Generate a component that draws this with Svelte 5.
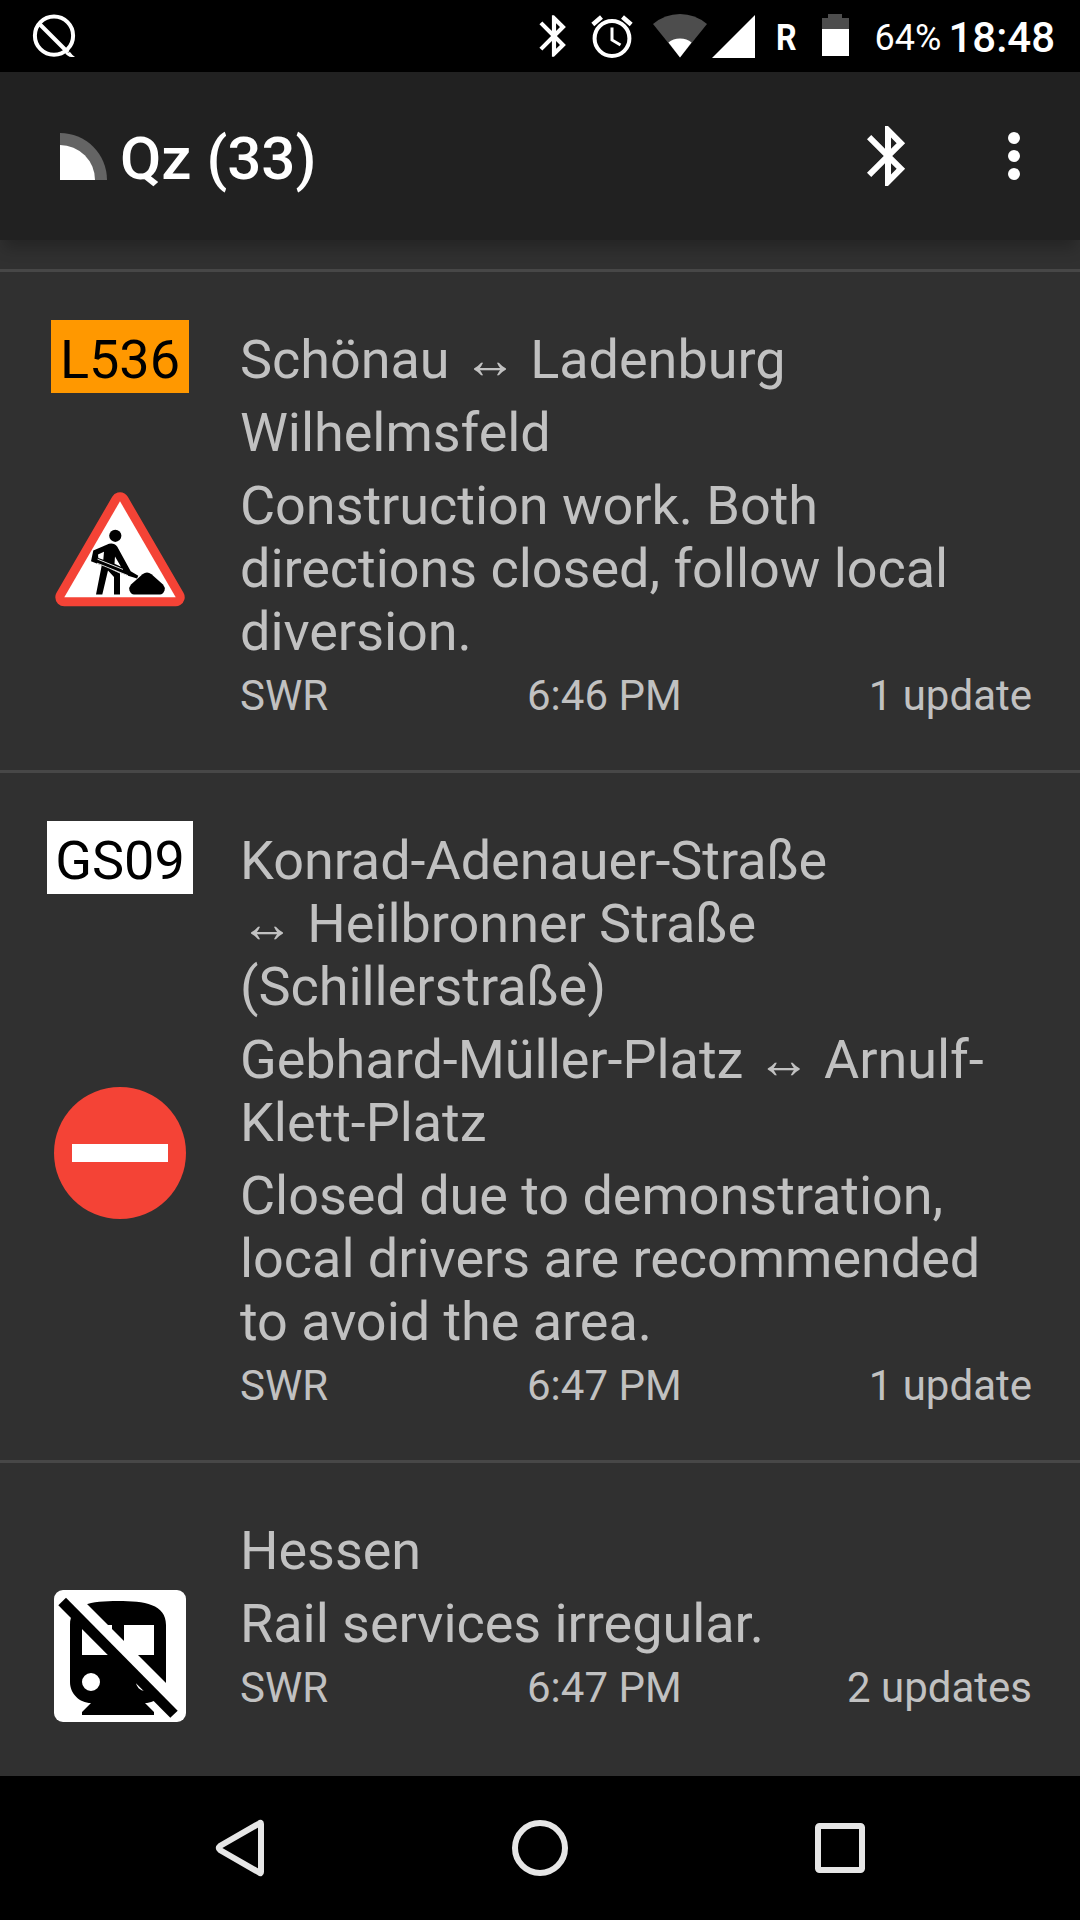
<script lang="ts">
  interface Report {
    road?: string
    roadClass?: 'orange' | 'white'
    icon: 'works' | 'closed' | 'rail'
    lines: string[][]
    source: string
    time: string
    updates: string
  }

  const reports: Report[] = [
    {
      road: 'L536',
      roadClass: 'orange',
      icon: 'works',
      lines: [
        ['Schönau ↔ Ladenburg'],
        ['Wilhelmsfeld'],
        ['Construction work. Both', 'directions closed, follow local', 'diversion.']
      ],
      source: 'SWR',
      time: '6:46 PM',
      updates: '1 update'
    },
    {
      road: 'GS09',
      roadClass: 'white',
      icon: 'closed',
      lines: [
        ['Konrad-Adenauer-Straße', '↔ Heilbronner Straße', '(Schillerstraße)'],
        ['Gebhard-Müller-Platz ↔ Arnulf-', 'Klett-Platz'],
        ['Closed due to demonstration,', 'local drivers are recommended', 'to avoid the area.']
      ],
      source: 'SWR',
      time: '6:47 PM',
      updates: '1 update'
    },
    {
      icon: 'rail',
      lines: [['Hessen'], ['Rail services irregular.']],
      source: 'SWR',
      time: '6:47 PM',
      updates: '2 updates'
    }
  ]

  const bluetooth =
    'M17.71 7.71L12 2h-1v7.59L6.41 5 5 6.41 10.59 12 5 17.59 6.41 19 11 14.41V22h1l5.71-5.71-4.3-4.29 4.3-4.29zM13 5.83l1.88 1.88L13 9.59V5.83zm1.88 10.46L13 18.17v-3.76l1.88 1.88z'
</script>

<div class="screen">
  <div class="status-bar">
    <svg class="q-icon" width="44" height="44" viewBox="0 0 44 44">
      <circle cx="22" cy="21.7" r="19.1" />
      <path d="M7 9.500L36 38.500" />
      <path d="M33 39.500l2.500 2q2 1.500 4 1.500h3.500q-2.500-1.500-5-5z" class="tail" />
    </svg>
    <div class="indicators">
      <svg class="bt" width="50" height="52" viewBox="0 0 24 24"><path d={bluetooth} /></svg>
      <svg class="alarm" width="42" height="44" viewBox="0 0 42 44">
        <circle cx="21" cy="24.500" r="17.400" />
        <path d="M21 13.500v12.500l8.500 5" class="hands" />
        <path d="M1.800 10.500L10.500 3M40.200 10.500L31.500 3" class="bells" />
      </svg>
      <svg class="wifi" width="54" height="44" viewBox="0 0 54 44">
        <path d="M0 10Q12 0 27 0T54 10L27 43.500z" fill="#4d4d4d" />
        <path d="M15.500 28.500Q20 24.500 27 24.500T38.500 28.500L27 43.500z" fill="#fff" />
      </svg>
      <svg class="signal" width="43" height="43" viewBox="0 0 43 43"><path d="M43 0v43H0z" fill="#fff" /></svg>
      <span class="roaming">R</span>
      <svg class="battery" width="27" height="42" viewBox="0 0 27 42">
        <path d="M6 0h14v4h7v11H0V4h6z" fill="#4d4d4d" />
        <path d="M0 15h27v27H0z" fill="#fff" />
      </svg>
      <span class="percent">64%</span>
      <span class="clock">18:48</span>
    </div>
  </div>

  <header class="app-bar">
    <svg class="logo" width="48" height="48" viewBox="0 0 48 48">
      <path d="M0 1a47 47 0 0 1 47 47H0z" fill="#646464" />
      <path d="M0 13a35 35 0 0 1 35 35H0z" fill="#fff" />
    </svg>
    <h1>Qz (33)</h1>
    <button class="action" aria-label="Bluetooth">
      <svg width="72" height="72" viewBox="0 0 24 24"><path d={bluetooth} /></svg>
    </button>
    <button class="menu" aria-label="More options">
      <svg width="72" height="72" viewBox="0 0 24 24">
        <path d="M12 8a2 2 0 1 0 0-4 2 2 0 0 0 0 4zm0 2a2 2 0 1 0 0 4 2 2 0 0 0 0-4zm0 6a2 2 0 1 0 0 4 2 2 0 0 0 0-4z" />
      </svg>
    </button>
  </header>

  <main>
    {#each reports as report}
      <article>
        <div class="aside">
          <div class="road-slot">
            {#if report.road}
              <span class="road {report.roadClass}">{report.road}</span>
            {/if}
          </div>
          <div class="sign">
            {#if report.icon === 'works'}
              <svg width="144" height="144" viewBox="0 0 144 144">
                <path d="M72 15.300L127.700 111.300H16.300z" fill="#f44336" stroke="#f44336" stroke-width="18" stroke-linejoin="round" />
                <path d="M72 15.300L127.700 111.300H16.300z" fill="#fff" />
                <circle cx="67.300" cy="49.800" r="6.100" />
                <!-- torso and arms, with the gaps between them -->
                <path
                  fill-rule="evenodd"
                  d="M43 75.200L45.300 64.500 61 57.800Q66 56.500 69.300 60.800L82.700 85.200 90.300 89.800 89 92.600 79.300 89.400zM50 68.500l.3 3.500 5 1.800.7-8zM67 70.500l-.5 7.300L73 80.800z"
                />
                <path d="M49.500 73.200L75 83.400M49 77.200L80 89.600" stroke="#fff" stroke-width=".9" />
                <path d="M53.700 79.500L60 82l12 5.500v21h-6V91l-6-6.500-5.700 24H48z" />
                <path d="M83 98.500L94.500 88.300q4.500-3.800 9 0l11.500 10.200q2.500 3 1.500 6-1.500 4-4.500 4H86q-3 0-4.500-4-1-3 1.500-6z" />
              </svg>
            {:else if report.icon === 'closed'}
              <svg width="144" height="144" viewBox="0 0 144 144">
                <circle cx="72" cy="72" r="66" fill="#f44336" />
                <path d="M24 63h96v18H24z" fill="#fff" />
              </svg>
            {:else}
              <svg width="144" height="144" viewBox="0 0 144 144">
                <rect x="6" y="6" width="132" height="132" rx="9" fill="#fff" />
                <path
                  transform="translate(-2 5) scale(6)"
                  d="M12 2c-4.420 0-8 .5-8 4v9.500C4 17.430 5.570 19 7.500 19L6 20.500v.5h12v-.5L16.500 19c1.930 0 3.500-1.570 3.500-3.500V6c0-3.500-3.580-4-8-4zM7.500 17a1.500 1.500 0 1 1 0-3 1.500 1.500 0 0 1 0 3zM11 11H6V6h5zm5.500 6a1.500 1.500 0 1 1 0-3 1.500 1.500 0 0 1 0 3zM18 11h-5V6h5z"
                />
                <path d="M30 11L128 109l-5 15L19 20z" fill="#fff" />
                <path d="M18 13.700L129.700 126.700 122.300 133.700 10.300 21.300z" />
              </svg>
            {/if}
          </div>
        </div>
        <div class="body">
          {#each report.lines as paragraph}
            <p>
              {#each paragraph as line}
                <span class="line">{line}</span>
              {/each}
            </p>
          {/each}
          <div class="meta">
            <span>{report.source}</span>
            <span>{report.time}</span>
            <span>{report.updates}</span>
          </div>
        </div>
      </article>
    {/each}
  </main>

  <nav>
    <svg width="64" height="80" viewBox="0 0 64 80"><path d="M53 16v48q0 2-1.500 .7L12 42q-2.500-2 0-4L51.500 15.300q1.500-1.300 1.500 .7z" /></svg>
    <svg width="64" height="80" viewBox="0 0 64 80"><circle cx="32" cy="40" r="25" /></svg>
    <svg width="64" height="80" viewBox="0 0 64 80"><rect x="10" y="18" width="44" height="44" rx="1.500" /></svg>
  </nav>
</div>

<style>
  :global(body) {
    margin: 0;
    background: #303030;
  }

  .screen {
    display: flex;
    flex-direction: column;
    width: 1080px;
    height: 1920px;
    overflow: hidden;
    background: #303030;
    color: #c1c1c1;
    font-family: Roboto, sans-serif;
  }

  svg {
    display: block;
    flex: none;
  }

  .status-bar {
    display: flex;
    justify-content: space-between;
    align-items: center;
    box-sizing: border-box;
    flex: none;
    height: 72px;
    padding: 0 25px 0 32px;
    background: #000;
    color: #fff;
  }

  .q-icon {
    fill: none;
    stroke: #fff;
    stroke-width: 4;
  }

  .q-icon .tail {
    fill: #fff;
    stroke: none;
  }

  .indicators {
    display: flex;
    align-items: center;
    height: 72px;
  }

  .bt {
    fill: #fff;
  }

  .alarm {
    margin-left: 12px;
    fill: none;
    stroke: #fff;
    stroke-width: 4;
  }

  .alarm .hands {
    stroke-width: 3;
  }

  .alarm .bells {
    stroke-width: 4.5;
  }

  .wifi {
    margin-left: 20px;
  }

  .signal {
    margin-left: 5px;
  }

  .roaming {
    width: 24px;
    margin-left: 21px;
    padding-top: 2px;
    font-size: 37px;
    font-weight: 700;
    transform: scaleX(0.87);
    transform-origin: left;
  }

  .battery {
    margin: 0 0 2px 22px;
  }

  .percent {
    width: 74px;
    margin-left: 25px;
    padding-top: 3px;
    font-size: 36px;
  }

  .clock {
    padding-top: 3px;
    font-size: 42px;
    font-weight: 500;
  }

  .app-bar {
    display: flex;
    align-items: center;
    box-sizing: border-box;
    position: relative;
    flex: none;
    height: 168px;
    padding: 0 30px 0 60px;
    background: #212121;
    box-shadow: 0 12px 14px -4px rgba(0, 0, 0, 0.24);
    color: #fff;
  }

  h1 {
    flex: 1;
    margin: 5px 0 0 12px;
    font-size: 60px;
    font-weight: 500;
    line-height: 70px;
  }

  button {
    padding: 0;
    border: none;
    background: none;
    fill: #fff;
  }

  .menu {
    margin-left: 54px;
  }

  main {
    flex: 1;
    padding-top: 29px;
    overflow: hidden;
  }

  article {
    display: flex;
    box-sizing: border-box;
    padding: 48px 48px 48px 0;
    border-top: 3px solid #474747;
  }

  .aside {
    display: flex;
    flex-direction: column;
    align-items: center;
    width: 240px;
  }

  .road-slot {
    display: flex;
    height: 73px;
  }

  .road {
    padding: 8px 8.5px 2px;
    font-size: 54px;
    line-height: 63px;
    color: #000;
  }

  .orange {
    background: #ff9800;
  }

  .white {
    background: #fff;
  }

  .sign {
    display: flex;
    flex: 1;
    align-items: center;
  }

  .body {
    flex: 1;
  }

  p {
    margin: 0;
    padding: 8px 0 2px;
    font-size: 54px;
    line-height: 63px;
    letter-spacing: -0.04px;
  }

  .line {
    display: block;
    white-space: nowrap;
  }

  .meta {
    display: grid;
    grid-template-columns: 287px auto 1fr;
    padding: 6px 0 1px;
    font-size: 42px;
    line-height: 50px;
  }

  .meta span:last-child {
    text-align: right;
  }

  nav {
    display: flex;
    justify-content: center;
    align-items: center;
    flex: none;
    gap: 236px;
    height: 144px;
    background: #000;
    fill: none;
    stroke: #e6e6e6;
    stroke-width: 6;
  }
</style>
